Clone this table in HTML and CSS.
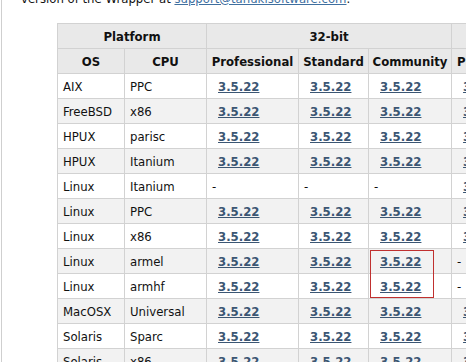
FILE: index.html
```html
<!DOCTYPE html>
<html>
<head>
<meta charset="utf-8">
<link rel="stylesheet" href="styles.css">
</head>
<body>
<div class="page">
  <p class="intro">version of the Wrapper at <a href="#">support@tanukisoftware.com</a>.</p>
  <table class="grid">
    <colgroup>
      <col class="c-os"><col class="c-cpu"><col class="c-pro"><col class="c-std"><col class="c-com"><col class="c-next">
    </colgroup>
    <thead>
      <tr><th colspan="2">Platform</th><th colspan="3">32-bit</th><th class="cut">64-bit</th></tr>
      <tr><th>OS</th><th>CPU</th><th>Professional</th><th>Standard</th><th>Community</th><th class="cut lft">Professional</th></tr>
    </thead>
    <tbody>
      <tr><td>AIX</td><td>PPC</td><td><a href="#">3.5.22</a></td><td><a href="#">3.5.22</a></td><td><a href="#">3.5.22</a></td><td><a href="#">3.5.22</a></td></tr>
      <tr><td>FreeBSD</td><td>x86</td><td><a href="#">3.5.22</a></td><td><a href="#">3.5.22</a></td><td><a href="#">3.5.22</a></td><td><a href="#">3.5.22</a></td></tr>
      <tr><td>HPUX</td><td>parisc</td><td><a href="#">3.5.22</a></td><td><a href="#">3.5.22</a></td><td><a href="#">3.5.22</a></td><td><a href="#">3.5.22</a></td></tr>
      <tr><td>HPUX</td><td>Itanium</td><td><a href="#">3.5.22</a></td><td><a href="#">3.5.22</a></td><td><a href="#">3.5.22</a></td><td><a href="#">3.5.22</a></td></tr>
      <tr><td>Linux</td><td>Itanium</td><td>-</td><td>-</td><td>-</td><td><a href="#">3.5.22</a></td></tr>
      <tr><td>Linux</td><td>PPC</td><td><a href="#">3.5.22</a></td><td><a href="#">3.5.22</a></td><td><a href="#">3.5.22</a></td><td><a href="#">3.5.22</a></td></tr>
      <tr><td>Linux</td><td>x86</td><td><a href="#">3.5.22</a></td><td><a href="#">3.5.22</a></td><td><a href="#">3.5.22</a></td><td><a href="#">3.5.22</a></td></tr>
      <tr><td>Linux</td><td>armel</td><td><a href="#">3.5.22</a></td><td><a href="#">3.5.22</a></td><td class="mark"><a href="#">3.5.22</a><span class="redbox"></span></td><td>-</td></tr>
      <tr><td>Linux</td><td>armhf</td><td><a href="#">3.5.22</a></td><td><a href="#">3.5.22</a></td><td><a href="#">3.5.22</a></td><td>-</td></tr>
      <tr><td>MacOSX</td><td>Universal</td><td><a href="#">3.5.22</a></td><td><a href="#">3.5.22</a></td><td><a href="#">3.5.22</a></td><td><a href="#">3.5.22</a></td></tr>
      <tr><td>Solaris</td><td>Sparc</td><td><a href="#">3.5.22</a></td><td><a href="#">3.5.22</a></td><td><a href="#">3.5.22</a></td><td><a href="#">3.5.22</a></td></tr>
      <tr><td>Solaris</td><td>x86</td><td><a href="#">3.5.22</a></td><td><a href="#">3.5.22</a></td><td><a href="#">3.5.22</a></td><td><a href="#">3.5.22</a></td></tr>
    </tbody>
  </table>
</div>
</body>
</html>
```
FILE: styles.css
```css
html, body {
  margin: 0;
  padding: 0;
  overflow: hidden;
  background: #ffffff;
}
body {
  width: 466px;
  height: 362px;
  font-family: "DejaVu Sans Condensed", "DejaVu Sans", sans-serif;
  font-size: 13px;
  color: #111111;
}
.page {
  margin-left: 1px;
  border-left: 1px solid #cfcfcf;
  padding-left: 19px;
  height: 400px;
  width: 700px;
}
.intro {
  margin: -9px 0 0 0;
  line-height: 16px;
  white-space: nowrap;
}
.intro a {
  color: #3f6f9f;
}
.grid {
  margin-top: 16px;
  margin-left: 36px;
  border-collapse: collapse;
  table-layout: fixed;
  width: 494px;
}
.c-os { width: 67px; }
.c-cpu { width: 82px; }
.c-pro { width: 92px; }
.c-std { width: 70px; }
.c-com { width: 83px; }
.c-next { width: 100px; }
.grid tr {
  height: 25px;
}
.grid th, .grid td {
  border: 1px solid #d2d2d2;
  padding: 0 0 0 5px;
  white-space: nowrap;
  overflow: hidden;
}
.grid th {
  background: #e9e9e9;
  font-weight: bold;
  text-align: center;
  padding: 0;
}
.grid th.lft {
  text-align: left;
  padding-left: 5px;
}
.grid td {
  text-align: left;
}
.grid tbody tr:nth-child(even) td {
  background: #f2f2f2;
}
.grid td a {
  color: #3b5673;
  font-weight: bold;
  margin-left: 6px;
}
.grid td.mark {
  position: relative;
  overflow: visible;
}
.redbox {
  position: absolute;
  left: 1px;
  top: 1px;
  width: 64px;
  height: 48px;
  border: 1px solid #c0302f;
  box-sizing: border-box;
  z-index: 2;
}
```
